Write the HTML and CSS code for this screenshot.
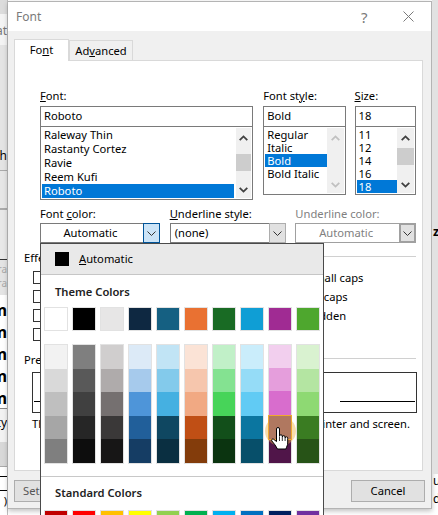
FILE: index.html
```html
<!DOCTYPE html>
<html lang="en">
<head>
    <meta charset="UTF-8">
    <meta name="viewport" content="width=device-width, initial-scale=1.0">
    <title>Font</title>
    <link rel="stylesheet" href="styles.css">
</head>
<body>

<svg class="defs" width="0" height="0">
    <symbol id="chev" viewBox="0 0 9 5"><path d="M.5.5l4 4 4-4" fill="none" stroke="currentColor"/></symbol>
    <symbol id="arrow-up" viewBox="0 0 9 6"><path d="M.7 5.2l3.8-3.8 3.8 3.8" fill="none" stroke="currentColor" stroke-width="1.8"/></symbol>
    <symbol id="arrow-down" viewBox="0 0 9 6"><path d="M.7.8l3.8 3.8L8.3.8" fill="none" stroke="currentColor" stroke-width="1.8"/></symbol>
</svg>

<div class="page">
    <div class="behind-left">
        <div class="bl bl-top"></div>
        <div class="bl bl-at"><span>at</span></div>
        <div class="bl bl-gray"></div>
        <div class="bl bl-h"><span>h</span></div>
        <div class="bl bl-tick"></div>
        <div class="bl bl-lines"></div>
        <div class="bl bl-faint"><span>ra</span><span>ra</span></div>
        <div class="bl bl-bold"><span>m</span><span>m</span><span>m</span><span>m</span><span>m</span></div>
        <div class="bl bl-ty"><span>ty</span></div>
        <div class="bl bl-gray2"></div>
        <div class="bl bl-box"><i></i></div>
        <div class="bl bl-par"><span>)</span></div>
    </div>

    <div class="dialog">
        <div class="titlebar">
            <span class="title">Font</span>
            <span class="help">?</span>
            <svg class="close" width="11" height="11" viewBox="0 0 11 11"><path d="M.5.5l10 10M10.5.5l-10 10" stroke="#7a7a7a" fill="none"/></svg>
        </div>

        <div class="tabs">
            <div class="tab tab-on">Fo<u>n</u>t</div>
            <div class="tab">Ad<u>v</u>anced</div>
        </div>

        <div class="panel">
            <div class="row-fonts">
                <div class="col col-font">
                    <label class="lbl"><u>F</u>ont:</label>
                    <div class="input">Roboto</div>
                    <div class="list list-font">
                        <div class="items">
                            <div>Raleway Thin</div>
                            <div>Rastanty Cortez</div>
                            <div>Ravie</div>
                            <div>Reem Kufi</div>
                            <div class="sel">Roboto</div>
                        </div>
                        <div class="scroll">
                            <svg class="sa"><use href="#arrow-up"/></svg>
                            <div class="thumb thumb-font"></div>
                            <svg class="sa sa-down"><use href="#arrow-down"/></svg>
                        </div>
                    </div>
                </div>
                <div class="col col-style">
                    <label class="lbl">Font st<u>y</u>le:</label>
                    <div class="input">Bold</div>
                    <div class="list list-short">
                        <div class="items">
                            <div>Regular</div>
                            <div>Italic</div>
                            <div class="sel">Bold</div>
                            <div>Bold Italic</div>
                        </div>
                        <div class="scroll scroll-off">
                            <svg class="sa"><use href="#arrow-up"/></svg>
                            <svg class="sa sa-down"><use href="#arrow-down"/></svg>
                        </div>
                    </div>
                </div>
                <div class="col col-size">
                    <label class="lbl"><u>S</u>ize:</label>
                    <div class="input">18</div>
                    <div class="list list-short">
                        <div class="items">
                            <div>11</div>
                            <div>12</div>
                            <div>14</div>
                            <div>16</div>
                            <div class="sel">18</div>
                        </div>
                        <div class="scroll">
                            <svg class="sa"><use href="#arrow-up"/></svg>
                            <div class="thumb thumb-size"></div>
                            <svg class="sa sa-down"><use href="#arrow-down"/></svg>
                        </div>
                    </div>
                </div>
            </div>

            <div class="row-combos">
                <div class="col-combo combo-color">
                    <label class="lbl">Font <u>c</u>olor:</label>
                    <div class="combo combo-open">
                        <span class="combo-text center">Automatic</span>
                        <span class="combo-btn"><svg class="chev"><use href="#chev"/></svg></span>
                    </div>
                </div>
                <div class="col-combo combo-style">
                    <label class="lbl"><u>U</u>nderline style:</label>
                    <div class="combo">
                        <span class="combo-text">(none)</span>
                        <span class="combo-btn"><svg class="chev"><use href="#chev"/></svg></span>
                    </div>
                </div>
                <div class="col-combo combo-under">
                    <label class="lbl lbl-off">Underline color:</label>
                    <div class="combo combo-off">
                        <span class="combo-text center">Automatic</span>
                        <span class="combo-btn"><svg class="chev"><use href="#chev"/></svg></span>
                    </div>
                </div>
            </div>

            <div class="legend legend-effects"><span>Effects</span><i></i></div>
            <div class="effects">
                <div class="effect"><b class="check"></b>Strikethrough</div>
                <div class="effect"><b class="check"></b>Small caps</div>
                <div class="effect"><b class="check"></b>Double strikethrough</div>
                <div class="effect"><b class="check"></b>All caps</div>
                <div class="effect"><b class="check"></b>Superscript</div>
                <div class="effect"><b class="check"></b>Hidden</div>
                <div class="effect"><b class="check"></b>Subscript</div>
            </div>

            <div class="legend"><span>Preview</span><i></i></div>
            <div class="preview">
                <span class="pv-line"></span>
                <span class="pv-text">Roboto</span>
                <span class="pv-line"></span>
            </div>
            <p class="note">This is a TrueType font. This font will be used on both printer and screen.</p>
        </div>

        <div class="buttons">
            <div class="btn btn-set">Set As Default</div>
            <div class="btn btn-cancel">Cancel</div>
        </div>
    </div>

    <div class="behind-right">
        <div class="br br-top"></div>
        <div class="br br-z"><span>z</span></div>
        <div class="br br-u"><span>u</span></div>
        <div class="br br-d"><span>d</span></div>
    </div>
</div>

<div class="popup">
    <div class="auto-row">
        <span class="auto-swatch"></span>
        <span><u>A</u>utomatic</span>
    </div>
    <div class="pop-title pop-title-theme">Theme Colors</div>
    <div class="swatches top-row">
        <span class="sw sw-ffffff"></span>
        <span class="sw sw-000000"></span>
        <span class="sw sw-e7e6e6"></span>
        <span class="sw sw-0e2841"></span>
        <span class="sw sw-156082"></span>
        <span class="sw sw-e97132"></span>
        <span class="sw sw-196b24"></span>
        <span class="sw sw-0f9ed5"></span>
        <span class="sw sw-a02b93"></span>
        <span class="sw sw-4ea72e"></span>
    </div>
    <div class="swatches tints">
        <div class="tint-col"><i class="sw-f2f2f2"></i><i class="sw-d9d9d9"></i><i class="sw-bfbfbf"></i><i class="sw-a6a6a6"></i><i class="sw-7f7f7f"></i></div>
        <div class="tint-col"><i class="sw-7f7f7f"></i><i class="sw-595959"></i><i class="sw-404040"></i><i class="sw-262626"></i><i class="sw-0d0d0d"></i></div>
        <div class="tint-col"><i class="sw-d0cece"></i><i class="sw-afabab"></i><i class="sw-757070"></i><i class="sw-3a3838"></i><i class="sw-171616"></i></div>
        <div class="tint-col"><i class="sw-dceaf7"></i><i class="sw-a6caec"></i><i class="sw-4e95d9"></i><i class="sw-215f9a"></i><i class="sw-153d64"></i></div>
        <div class="tint-col"><i class="sw-c1e4f5"></i><i class="sw-83caeb"></i><i class="sw-45b0e1"></i><i class="sw-0f4761"></i><i class="sw-0a2f41"></i></div>
        <div class="tint-col"><i class="sw-fbe3d6"></i><i class="sw-f6c6ad"></i><i class="sw-f1a983"></i><i class="sw-c04f15"></i><i class="sw-833c0b"></i></div>
        <div class="tint-col"><i class="sw-c1f0c8"></i><i class="sw-84e291"></i><i class="sw-47d459"></i><i class="sw-124f1a"></i><i class="sw-0b3410"></i></div>
        <div class="tint-col"><i class="sw-caedfb"></i><i class="sw-95dcf7"></i><i class="sw-61cbf4"></i><i class="sw-0b76a0"></i><i class="sw-074f6a"></i></div>
        <div class="tint-col"><i class="sw-f2cfee"></i><i class="sw-e59edc"></i><i class="sw-d86dcd"></i><i class="hovered"></i><i class="sw-501549"></i></div>
        <div class="tint-col"><i class="sw-d9f2d0"></i><i class="sw-b4e5a2"></i><i class="sw-8ed973"></i><i class="sw-3a7c22"></i><i class="sw-275317"></i></div>
    </div>
    <div class="pop-sep"></div>
    <div class="pop-title pop-title-std">Standard Colors</div>
    <div class="swatches">
        <span class="sw sw-c00000"></span>
        <span class="sw sw-ff0000"></span>
        <span class="sw sw-ffc000"></span>
        <span class="sw sw-ffff00"></span>
        <span class="sw sw-92d050"></span>
        <span class="sw sw-00b050"></span>
        <span class="sw sw-00b0f0"></span>
        <span class="sw sw-0070c0"></span>
        <span class="sw sw-002060"></span>
        <span class="sw sw-7030a0"></span>
    </div>
    <div class="halo"></div>
</div>

<svg class="hand" width="19" height="23" viewBox="0 0 19 23">
    <path d="M5.5 2a1.5 1.5 0 0 1 3 0v7.200a1.400 1.400 0 0 1 2.800 0v.8a1.400 1.400 0 0 1 2.800.2v.8a1.300 1.300 0 0 1 2.600.3V16c0 2.300-1 3.500-1.800 6H6.500C5 19 3 16.500.9 14c-.9-1.100.3-2.500 1.600-1.800L5.500 14.500z" fill="#fff" stroke="#000" stroke-linejoin="round"/>
    <path d="M8.500 9.500V14M11.300 10v4M14.100 11v3" stroke="#000" fill="none" stroke-width=".8"/>
</svg>

</body>
</html>
```

FILE: styles.css
```css
* {
    box-sizing: border-box;
}
body {
    margin: 0;
    width: 438px;
    height: 515px;
    overflow: hidden;
    position: relative;
    background: #fff;
    font-family: "Noto Sans", "Open Sans", sans-serif;
    font-size: 11.2px;
    color: #000;
}
.defs {
    position: absolute;
}
.page {
    display: flex;
    height: 515px;
}

/* the document window behind the dialog */
.behind-left {
    width: 8px;
    flex: none;
    overflow: hidden;
    border-right: 1px solid #bdbdbd;
}
.bl {
    display: flex;
    flex-direction: column;
    align-items: flex-end;
    overflow: hidden;
    white-space: nowrap;
}
.bl-top {
    height: 14px;
    background: #dcdcdc;
}
.bl-at {
    height: 31px;
    padding-top: 8px;
    background: #f4f4f4;
    color: #777;
    font-size: 12px;
}
.bl-gray {
    height: 100px;
    background: #e4e4e4;
}
.bl-h {
    height: 25px;
    padding-top: 2px;
    background: #e4e4e4;
    font-size: 12px;
}
.bl-tick {
    height: 40px;
    background: #e6e6e6;
    border-top: 1px solid #aaa;
    border-bottom: 2px solid #aaa;
}
.bl-lines {
    height: 50px;
    background: #e8e8e8;
    border-bottom: 1px solid #333;
}
.bl-faint {
    height: 35px;
    padding-top: 2px;
    background: #e4e4e4;
    color: #aaa;
    font-size: 10px;
}
.bl-bold {
    height: 114px;
    padding-top: 4px;
    background: #fff;
    color: #000;
    font-weight: 700;
    font-size: 16px;
    line-height: 22px;
    border-bottom: 1px solid #888;
}
.bl-ty {
    height: 33px;
    padding-top: 5px;
    background: #f2f2f2;
    font-size: 12px;
}
.bl-gray2 {
    height: 25px;
    background: #d8d8d8;
    border-bottom: 1px solid #aaa;
}
.bl-box {
    height: 26px;
    padding-top: 9px;
}
.bl-box i {
    display: block;
    width: 8px;
    height: 15px;
    border: 1px solid #000;
    border-right: 0;
}
.bl-par {
    height: 20px;
}

.behind-right {
    flex: 1;
    overflow: hidden;
    font-weight: 700;
    font-size: 12px;
}
.br {
    overflow: hidden;
}
.br-top {
    height: 224px;
    background: #e2e2e2;
}
.br-z {
    height: 250px;
    background: #e2e2e2;
    padding-left: 1px;
    line-height: 16px;
}
.br-u {
    height: 18px;
    font-weight: 400;
    padding-left: 1px;
    line-height: 14px;
}
.br-d {
    height: 15px;
    font-weight: 400;
    padding-left: 1px;
    line-height: 14px;
}

/* dialog */
.dialog {
    width: 424px;
    height: 508px;
    flex: none;
    margin-top: 1px;
    background: #f0f0f0;
    border: 1px solid #b4b4b4;
    border-left: 0;
    box-shadow: 0 2px 5px rgba(0, 0, 0, 0.25);
}
.titlebar {
    height: 29px;
    background: #fff;
    display: flex;
    align-items: center;
    padding-left: 8px;
    color: #7a7a7a;
}
.title {
    font-size: 12px;
    width: 24px;
}
.help {
    margin-left: 321px;
    font-size: 15px;
    width: 9px;
}
.close {
    margin-left: 33px;
}
.tabs {
    display: flex;
    align-items: flex-end;
    height: 29px;
    padding: 0 0 0 6px;
}
.tab {
    height: 20px;
    width: 64px;
    border: 1px solid #d9d9d9;
    border-bottom: 0;
    text-align: center;
    line-height: 19px;
}
.tab-on {
    width: 55px;
    height: 22px;
    margin-bottom: -1px;
    position: relative;
    background: #fff;
    border-color: #d9d9d9;
    line-height: 20px;
}
.panel {
    width: 409px;
    height: 411px;
    margin-left: 6px;
    padding: 28px 6px 0 9px;
    background: #fff;
    border: 1px solid #d9d9d9;
}
.row-fonts {
    display: flex;
    gap: 9px;
    padding-left: 16px;
    height: 111px;
}
.col-font {
    width: 215px;
    margin-right: 1px;
}
.col-style {
    width: 83px;
}
.col-size {
    width: 62px;
}
.lbl {
    display: block;
    height: 17px;
    line-height: 13px;
}
.lbl-off {
    color: #808080;
}
.input {
    height: 21px;
    border: 1px solid #7a7a7a;
    padding-left: 3px;
    line-height: 18px;
}
.list {
    height: 74px;
    margin-top: -1px;
    border: 1px solid #7a7a7a;
    display: flex;
    padding: 1px;
    line-height: 14px;
}
.list-short {
    height: 69px;
    line-height: 13px;
}
.items {
    flex: 1;
    white-space: nowrap;
    overflow: hidden;
}
.items div {
    padding-left: 2px;
}
.sel {
    background: #0078d7;
    color: #fff;
}
.scroll {
    width: 17px;
    flex: none;
    background: #f0f0f0;
    display: flex;
    flex-direction: column;
    align-items: center;
    color: #404040;
    padding-top: 7px;
}
.scroll-off {
    color: #c0c0c0;
}
.sa {
    width: 9px;
    height: 6px;
    flex: none;
}
.sa-down {
    margin-top: auto;
    margin-bottom: 5px;
}
.thumb {
    width: 17px;
    height: 17px;
    background: #cdcdcd;
    flex: none;
}
.thumb-font {
    margin-top: 13px;
}
.thumb-size {
    margin-top: 7px;
}
.list-font .scroll {
    width: 15px;
    margin-left: 2px;
}
.list-font .thumb {
    width: 15px;
}

.row-combos {
    display: flex;
    margin-top: 6px;
    padding-left: 16px;
}
.combo-color {
    width: 120px;
    margin-right: 10px;
}
.combo-style {
    width: 117px;
    margin-right: 9px;
}
.combo-under {
    width: 121px;
}
.col-combo .lbl {
    height: 16px;
    line-height: 15px;
}
.combo {
    margin-top: 1px;
    height: 20px;
    border: 1px solid #7a7a7a;
    display: flex;
    align-items: stretch;
    line-height: 17px;
}
.combo-text {
    flex: 1;
    padding-left: 4px;
}
.combo-text.center {
    text-align: center;
    padding: 0 3px 0 0;
}
.combo-btn {
    width: 17px;
    flex: none;
    display: flex;
    align-items: center;
    justify-content: center;
    background: #e1e1e1;
    border: 1px solid #adadad;
    margin: -1px -1px -1px 0;
    color: #333;
}
.combo-open .combo-btn {
    background: #cce4f7;
    border: 1px solid #005499;
}
.combo-off {
    border-color: #a0a0a0;
    color: #808080;
}
.combo-off .combo-btn {
    border: 2px solid #a0a0a0;
}
.chev {
    width: 9px;
    height: 5px;
}

.legend {
    display: flex;
    align-items: center;
    height: 16px;
    gap: 4px;
    margin-top: 6px;
    line-height: 15px;
}
.legend i {
    flex: 1;
    height: 1px;
    background: #d0d0d0;
    margin-top: -2px;
}
.effects {
    display: grid;
    grid-template-columns: 258px 1fr;
    grid-auto-rows: 19px;
    height: 80px;
    padding: 3px 0 0 9px;
}
.effect {
    display: flex;
    align-items: center;
    gap: 4px;
    line-height: 15px;
}
.check {
    width: 13px;
    height: 13px;
    border: 1px solid #333;
    background: #fff;
}
.preview {
    margin: 5px 0 0 8px;
    height: 41px;
    width: 385px;
    border: 1px solid #333;
    display: flex;
    align-items: flex-end;
    padding: 0 1px;
    overflow: hidden;
}
.pv-line {
    flex: 0 0 75px;
    height: 1px;
    background: #000;
    margin-bottom: 10px;
}
.pv-text {
    flex: 1;
    text-align: center;
    font-weight: 700;
    font-size: 24px;
    line-height: 30px;
}
.note {
    margin: 3px 0 0 8px;
    line-height: 16px;
    width: 386px;
    white-space: nowrap;
    letter-spacing: -0.04px;
}
.buttons {
    display: flex;
    justify-content: space-between;
    padding: 9px 6px 0 6px;
}
.btn {
    height: 22px;
    border: 1px solid #adadad;
    background: #e1e1e1;
    text-align: center;
    line-height: 19px;
}
.btn-set {
    width: 100px;
    padding-left: 8px;
    text-align: left;
    color: #555;
    overflow: hidden;
}
.btn-cancel {
    width: 74px;
}

/* colour drop-down over the dialog */
.popup {
    position: absolute;
    left: 40px;
    top: 243px;
    width: 284px;
    height: 290px;
    background: #fff;
    border: 1px solid #4a4a4a;
    overflow: hidden;
}
.auto-row {
    height: 31px;
    display: flex;
    align-items: center;
    gap: 10px;
    padding: 0 0 1px 14px;
    background: #e9e9e9;
    border-bottom: 1px solid #c6c6c6;
}
.auto-swatch {
    width: 14px;
    height: 14px;
    background: #000;
}
.pop-title {
    padding-left: 14px;
    font-weight: 600;
    color: #222;
    line-height: 16px;
}
.pop-title-theme {
    margin-top: 9px;
    height: 23px;
}
.pop-title-std {
    margin-top: 8px;
    height: 25px;
}
.swatches {
    display: flex;
    gap: 4px;
    padding-left: 3px;
}
.sw {
    width: 24px;
    height: 24px;
    border: 1px solid #e2e2e2;
    flex: none;
}
.tints {
    margin-top: 13px;
}
.tint-col {
    width: 24px;
    height: 120px;
    border: 1px solid #e2e2e2;
    display: flex;
    flex-direction: column;
    flex: none;
}
.tint-col i {
    flex: 1;
    display: block;
}
.hovered {
    position: relative;
    z-index: 2;
    margin: 0 -1px;
    background: #b07860;
    border: 1px solid #f0a830;
}
.halo {
    position: absolute;
    left: 224px;
    top: 172px;
    width: 31px;
    height: 30px;
    border-radius: 50%;
    background: rgba(240, 180, 70, 0.45);
    z-index: 1;
}
.pop-sep {
    height: 1px;
    background: #c8c8c8;
    margin-top: 12px;
}
.hand {
    position: absolute;
    left: 271px;
    top: 427px;
    z-index: 3;
}

/* palette */
.sw-ffffff { background: #ffffff; }
.sw-000000 { background: #000000; }
.sw-e7e6e6 { background: #e7e6e6; }
.sw-0e2841 { background: #0e2841; }
.sw-156082 { background: #156082; }
.sw-e97132 { background: #e97132; }
.sw-196b24 { background: #196b24; }
.sw-0f9ed5 { background: #0f9ed5; }
.sw-a02b93 { background: #a02b93; }
.sw-4ea72e { background: #4ea72e; }
.sw-f2f2f2 { background: #f2f2f2; }
.sw-d9d9d9 { background: #d9d9d9; }
.sw-bfbfbf { background: #bfbfbf; }
.sw-a6a6a6 { background: #a6a6a6; }
.sw-7f7f7f { background: #7f7f7f; }
.sw-595959 { background: #595959; }
.sw-404040 { background: #404040; }
.sw-262626 { background: #262626; }
.sw-0d0d0d { background: #0d0d0d; }
.sw-d0cece { background: #d0cece; }
.sw-afabab { background: #afabab; }
.sw-757070 { background: #757070; }
.sw-3a3838 { background: #3a3838; }
.sw-171616 { background: #171616; }
.sw-dceaf7 { background: #dceaf7; }
.sw-a6caec { background: #a6caec; }
.sw-4e95d9 { background: #4e95d9; }
.sw-215f9a { background: #215f9a; }
.sw-153d64 { background: #153d64; }
.sw-c1e4f5 { background: #c1e4f5; }
.sw-83caeb { background: #83caeb; }
.sw-45b0e1 { background: #45b0e1; }
.sw-0f4761 { background: #0f4761; }
.sw-0a2f41 { background: #0a2f41; }
.sw-fbe3d6 { background: #fbe3d6; }
.sw-f6c6ad { background: #f6c6ad; }
.sw-f1a983 { background: #f1a983; }
.sw-c04f15 { background: #c04f15; }
.sw-833c0b { background: #833c0b; }
.sw-c1f0c8 { background: #c1f0c8; }
.sw-84e291 { background: #84e291; }
.sw-47d459 { background: #47d459; }
.sw-124f1a { background: #124f1a; }
.sw-0b3410 { background: #0b3410; }
.sw-caedfb { background: #caedfb; }
.sw-95dcf7 { background: #95dcf7; }
.sw-61cbf4 { background: #61cbf4; }
.sw-0b76a0 { background: #0b76a0; }
.sw-074f6a { background: #074f6a; }
.sw-f2cfee { background: #f2cfee; }
.sw-e59edc { background: #e59edc; }
.sw-d86dcd { background: #d86dcd; }
.sw-501549 { background: #501549; }
.sw-d9f2d0 { background: #d9f2d0; }
.sw-b4e5a2 { background: #b4e5a2; }
.sw-8ed973 { background: #8ed973; }
.sw-3a7c22 { background: #3a7c22; }
.sw-275317 { background: #275317; }
.sw-c00000 { background: #c00000; }
.sw-ff0000 { background: #ff0000; }
.sw-ffc000 { background: #ffc000; }
.sw-ffff00 { background: #ffff00; }
.sw-92d050 { background: #92d050; }
.sw-00b050 { background: #00b050; }
.sw-00b0f0 { background: #00b0f0; }
.sw-0070c0 { background: #0070c0; }
.sw-002060 { background: #002060; }
.sw-7030a0 { background: #7030a0; }
```
